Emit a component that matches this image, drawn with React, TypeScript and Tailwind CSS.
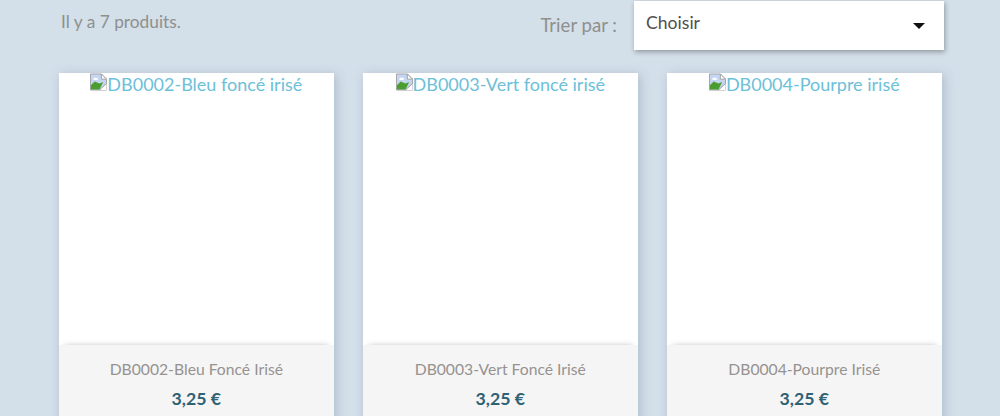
const products = [
  { ref: 'DB0002', alt: 'DB0002-Bleu foncé irisé', name: 'DB0002-Bleu Foncé Irisé' },
  { ref: 'DB0003', alt: 'DB0003-Vert foncé irisé', name: 'DB0003-Vert Foncé Irisé' },
  { ref: 'DB0004', alt: 'DB0004-Pourpre irisé', name: 'DB0004-Pourpre Irisé' },
];

function BrokenImage() {
  return (
    <svg width="17" height="18" viewBox="0 0 18 18" className="shrink-0 -mt-px">
      <path d="M0.5 0.5H12L17.5 6V17.5H0.5Z" fill="#c5d5f2" stroke="#a0a0a0" />
      <path d="M12 0.5V6H17.5Z" fill="#fff" stroke="#a0a0a0" />
      <path d="M3 6C4.5 4 7.5 4 9 6C7.5 7 4.5 7 3 6Z" fill="#fff" />
      <path d="M1 17V12.5L5 8.5L10 10.5L14 9L10 17Z" fill="#4a9e2f" />
      <path d="M10 17.5L17.5 10V17.5Z" fill="#fff" />
      <path d="M10 17.5L17.5 10.5" stroke="#8f8f8f" fill="none" />
    </svg>
  );
}

function ProductCard({ alt, name }: { alt: string; name: string }) {
  return (
    <article className="w-[274.67px] h-[360px] shrink-0 flex flex-col bg-white shadow-[2px_2px_10px_rgba(110,135,160,0.38)]">
      <div className="h-[272px] flex justify-center items-start text-[18px] leading-[20px] pt-px text-[#6cc0d9]">
        <BrokenImage />
        <span>{alt}</span>
      </div>
      <div className="flex-1 bg-[#f5f5f5] pt-[13px] text-center shadow-[0_-5px_6px_-6px_rgba(0,0,0,0.3)]">
        <h3 className="text-[15.7px] leading-[22px] text-[#969290]">{name}</h3>
        <p className="mt-[7px] text-[17.7px] leading-[24px] font-bold text-[#2e6174]">3,25 €</p>
      </div>
    </article>
  );
}

export default function App() {
  return (
    <div className="h-[416px] w-[1000px] overflow-hidden bg-[#d3dfe9] font-['Lato',sans-serif]">
      <div className="flex h-[73px] items-start pl-[61px]">
        <p className="mt-[11px] text-[17.3px] leading-[22px] text-[#8f8f8d]">Il y a 7 produits.</p>
        <div className="ml-auto mr-[56px] mt-px flex items-start">
          <span className="mr-[17px] mt-[13px] text-[18.6px] leading-[22px] text-[#8f8f8d]">Trier par :</span>
          <div className="flex h-[49px] w-[310px] items-start justify-between bg-white pl-[12px] pr-[19px] shadow-[1px_2px_5px_rgba(0,0,0,0.32)]">
            <span className="mt-[11px] text-[17.6px] leading-[22px] text-[#4f4f4f]">Choisir</span>
            <span className="mt-[22px] h-0 w-0 border-x-[6px] border-t-[6px] border-x-transparent border-t-[#111]" />
          </div>
        </div>
      </div>
      <div className="flex gap-[29.33px] pl-[59px]">
        {products.map((p) => (
          <ProductCard key={p.ref} alt={p.alt} name={p.name} />
        ))}
      </div>
    </div>
  );
}
